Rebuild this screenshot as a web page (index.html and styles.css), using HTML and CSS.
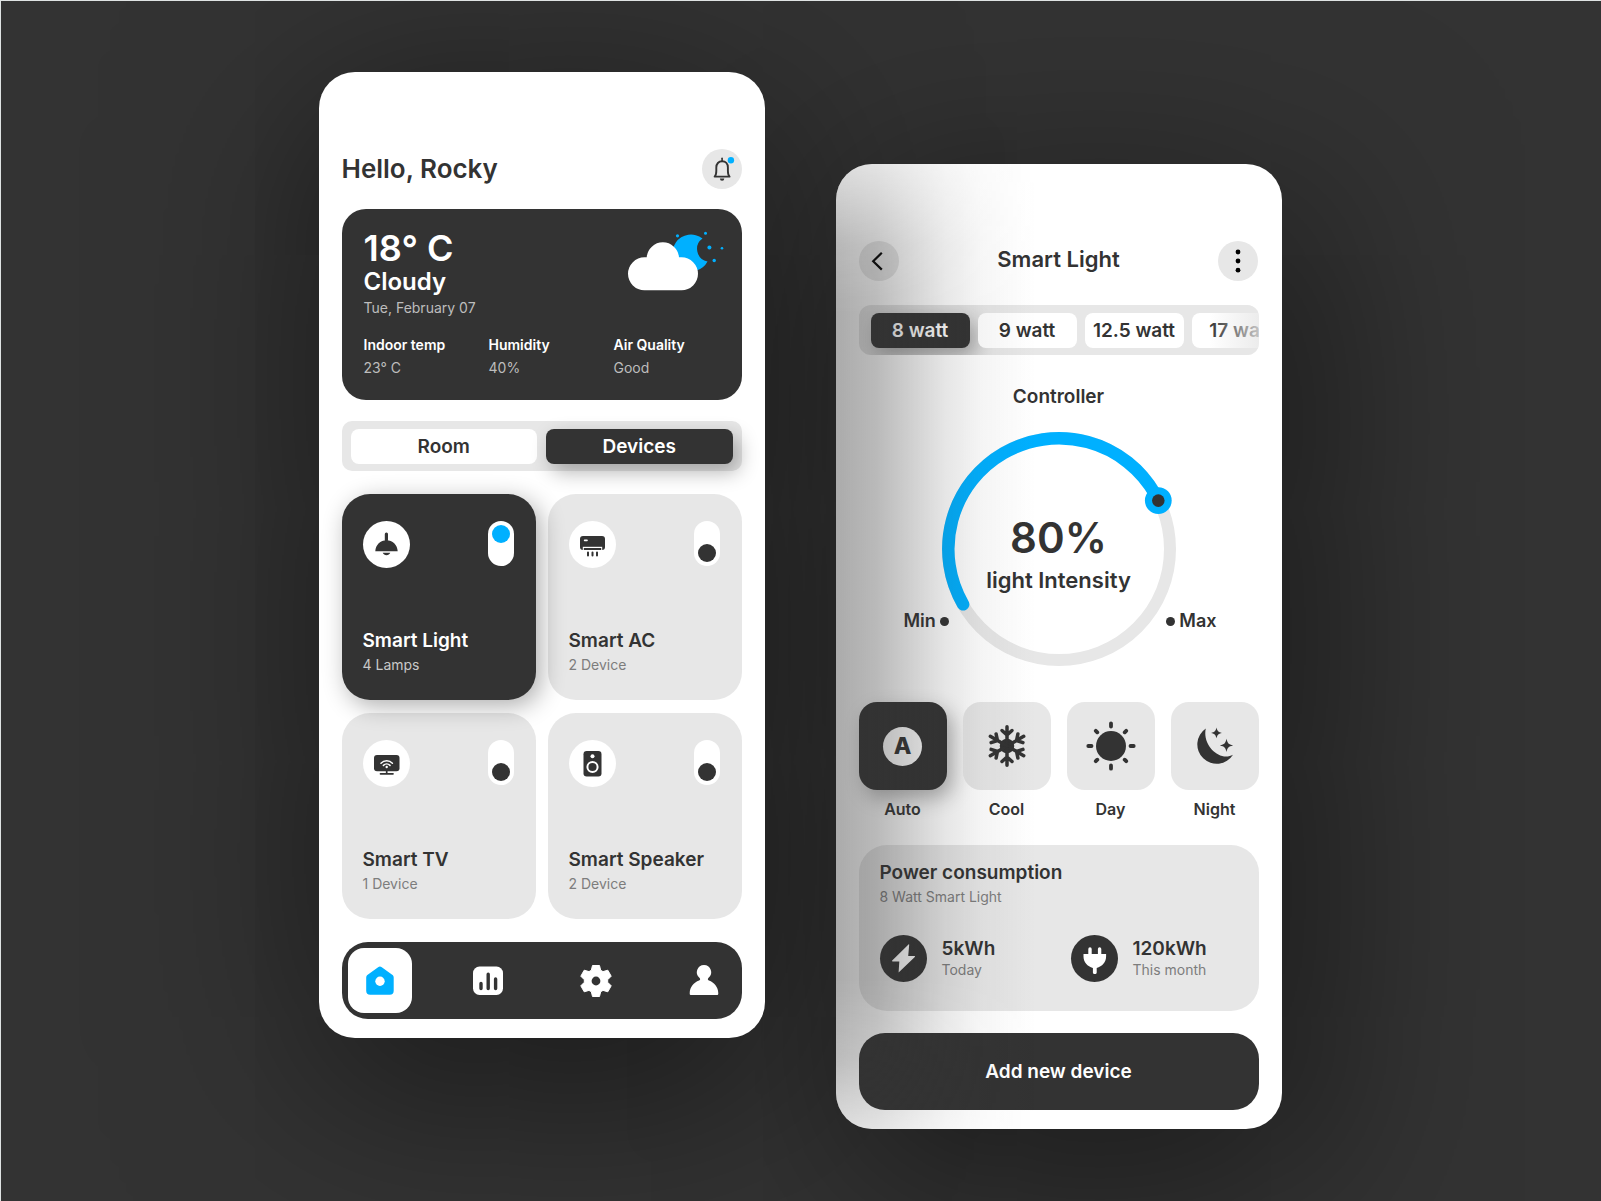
FILE: index.html
```html
<!DOCTYPE html>
<html lang="en">
<head>
<meta charset="utf-8">
<meta name="viewport" content="width=device-width, initial-scale=1">
<title>Smart Home</title>
<link rel="stylesheet" href="styles.css">
</head>
<body>
<div class="stage">
  <main class="phone phone-home">
    <header class="home-header">
      <h1 class="greeting">Hello, Rocky</h1>
      <button class="round-button" type="button" aria-label="Notifications">
        <svg width="40" height="40" viewBox="0 0 40 40" fill="none">
          <path d="M12.600 27.600c1.500-1.300 1.700-2.700 1.700-5.600V18.500c0-3.700 2.300-6.200 5.800-6.200s5.800 2.500 5.800 6.200V22c0 2.900.2 4.300 1.700 5.600z" stroke="#333" stroke-width="1.900" stroke-linejoin="round"/>
          <path d="M20.100 9.200v3" stroke="#333" stroke-width="1.600" stroke-linecap="round"/>
          <path d="M17.900 29.600h4.400a2.200 2.200 0 0 1-4.400 0z" fill="#333"/>
          <circle cx="28.900" cy="11.200" r="3.200" fill="#00b0ff"/>
        </svg>
      </button>
    </header>

    <section class="weather">
      <div class="weather-top">
        <div>
          <p class="temperature">18° C</p>
          <p class="condition">Cloudy</p>
          <p class="date">Tue, February 07</p>
        </div>
        <svg class="weather-icon" width="96" height="60" viewBox="0 0 96 60">
          <path d="M74.500 4.500A18.500 18.500 0 1 0 79.500 27.500 12.800 12.800 0 0 1 74.500 4.500z" fill="#00b0ff"/>
          <path d="M16.500 56.300a16.500 16.500 0 0 1 0-33h2.200a16.200 16.200 0 0 1 32.300 0h2.500a16.500 16.500 0 0 1 0 33z" fill="#fff"/>
          <g fill="#00b0ff">
            <circle cx="49.500" cy="1.800" r="1.600"/><circle cx="77.500" cy="-.8" r="1.500"/>
            <circle cx="81.400" cy="13.600" r="2"/><circle cx="94" cy="14.200" r="1.300"/>
            <circle cx="86.200" cy="26.500" r="1.700"/>
          </g>
        </svg>
      </div>
      <dl class="stats">
        <div><dt>Indoor temp</dt><dd>23° C</dd></div>
        <div><dt>Humidity</dt><dd>40%</dd></div>
        <div><dt>Air Quality</dt><dd>Good</dd></div>
      </dl>
    </section>

    <div class="segmented">
      <button class="segment" type="button" aria-pressed="false">Room</button>
      <button class="segment segment-active" type="button" aria-pressed="true">Devices</button>
    </div>

    <section class="devices">
      <article class="device device-active">
        <div class="device-top">
          <span class="device-icon">
            <svg width="47" height="47" viewBox="0 0 47 47" fill="#333">
              <rect x="21.800" y="11.500" width="3.200" height="9" rx="1.500"/>
              <path d="M12.300 30.200c.3-6.400 5.200-11 11.200-11s10.900 4.600 11.200 11zM19.700 31.800h7.600c-.7 1.600-2 2.500-3.800 2.500s-3.100-.9-3.800-2.500z"/>
            </svg>
          </span>
          <input class="toggle" type="checkbox" id="light" checked>
        </div>
        <label class="device-label" for="light"><span class="device-name">Smart Light</span><span class="device-count">4 Lamps</span></label>
      </article>
      <article class="device">
        <div class="device-top">
          <span class="device-icon">
            <svg width="47" height="47" viewBox="0 0 47 47">
              <path d="M14 15h19a3 3 0 0 1 3 3v8a3 3 0 0 1-3 3H14a3 3 0 0 1-3-3v-8a3 3 0 0 1 3-3z" fill="#333"/>
              <path d="M13.800 30v-4.200h19.400V30" fill="#fff"/>
              <path d="M14.800 27h17.400v2H14.800z" fill="#333"/>
              <path d="M15.600 19.400h2.400" stroke="#fff" stroke-width="1.600" stroke-linecap="round"/>
              <path d="M19 31.500v3M23.500 31.500v3M28 31.500v3" stroke="#333" stroke-width="2" stroke-linecap="round"/>
            </svg>
          </span>
          <input class="toggle" type="checkbox" id="ac">
        </div>
        <label class="device-label" for="ac"><span class="device-name">Smart AC</span><span class="device-count">2 Device</span></label>
      </article>
      <article class="device">
        <div class="device-top">
          <span class="device-icon">
            <svg width="47" height="47" viewBox="0 0 47 47" fill="none">
              <rect x="11" y="15" width="25.500" height="16.200" rx="3" fill="#333"/>
              <path d="M23.700 31v3M17.500 33.800h12.500" stroke="#333" stroke-width="1.700" stroke-linecap="round"/>
              <path d="M18 23.200a8 8 0 0 1 11.400 0M20.400 25.400a4.700 4.700 0 0 1 6.600 0" stroke="#fff" stroke-width="1.500" stroke-linecap="round"/>
              <circle cx="23.700" cy="27" r="1.200" fill="#fff"/>
            </svg>
          </span>
          <input class="toggle" type="checkbox" id="tv">
        </div>
        <label class="device-label" for="tv"><span class="device-name">Smart TV</span><span class="device-count">1 Device</span></label>
      </article>
      <article class="device">
        <div class="device-top">
          <span class="device-icon">
            <svg width="47" height="47" viewBox="0 0 47 47">
              <rect x="14.500" y="11" width="18" height="25.500" rx="3.200" fill="#333"/>
              <circle cx="23.500" cy="16.200" r="2" fill="#fff"/>
              <circle cx="23.500" cy="27" r="5.100" fill="none" stroke="#fff" stroke-width="2"/>
            </svg>
          </span>
          <input class="toggle" type="checkbox" id="speaker">
        </div>
        <label class="device-label" for="speaker"><span class="device-name">Smart Speaker</span><span class="device-count">2 Device</span></label>
      </article>
    </section>

    <nav class="tabs" aria-label="Main">
      <a class="tab tab-active" href="#home" aria-label="Home">
        <svg width="32" height="32" viewBox="0 0 32 32">
          <path d="M17.800 2.200l10.400 7.600c1 .7 1.500 1.700 1.500 2.900v13.100a4 4 0 0 1-4 4H6.200a4 4 0 0 1-4-4V12.700c0-1.200.5-2.200 1.500-2.900l10.400-7.600a3.100 3.100 0 0 1 3.700 0z" fill="#00b0ff"/>
          <circle cx="16" cy="16.200" r="4.700" fill="#fff"/>
        </svg>
      </a>
      <a class="tab" href="#stats" aria-label="Statistics">
        <svg width="32" height="32" viewBox="0 0 32 32">
          <rect x="1" y="1.500" width="30" height="28.500" rx="6.500" fill="#fff"/>
          <path d="M9 18.500v5M16.200 9.200v14.300M23.600 14v9.500" stroke="#333" stroke-width="3.400" stroke-linecap="round"/>
        </svg>
      </a>
      <a class="tab" href="#settings" aria-label="Settings">
        <svg width="32" height="32" viewBox="0 0 32 32">
          <path d="M12.500.5h7l1.200 4.800 2.300 1.300 4.800-1.400 3.400 6-3.500 3.500v2.600l3.500 3.500-3.400 6-4.800-1.400-2.300 1.300-1.200 4.800h-7l-1.200-4.800L9 25.400l-4.800 1.400-3.400-6 3.500-3.500v-2.600L.8 11.200l3.400-6L9 6.600l2.300-1.300z" fill="#fff" stroke="#fff" stroke-linejoin="round"/>
          <circle cx="16" cy="16" r="4.400" fill="#333"/>
        </svg>
      </a>
      <a class="tab" href="#profile" aria-label="Profile">
        <svg width="32" height="32" viewBox="0 0 32 32" fill="#fff">
          <path d="M16 0a7.200 7.200 0 0 1 4.600 12.700c-1 .8-1.100 2.300.3 2.900 5.400 1.900 9.200 6.400 9.400 12.600 0 1.400-.4 1.900-1.700 1.900H3.400c-1.300 0-1.700-.5-1.700-1.900.2-6.200 4-10.700 9.400-12.600 1.400-.6 1.300-2.100.3-2.900A7.200 7.200 0 0 1 16 0z"/>
        </svg>
      </a>
    </nav>
  </main>

  <main class="phone phone-light">
    <header class="light-header">
      <button class="round-button" type="button" aria-label="Back">
        <svg width="40" height="40" viewBox="0 0 40 40" fill="none"><path d="M22.800 11.800l-8.600 8.400 8.600 8.400" stroke="#000" stroke-width="2.200"/></svg>
      </button>
      <h1 class="screen-title">Smart Light</h1>
      <button class="round-button" type="button" aria-label="More">
        <svg width="40" height="40" viewBox="0 0 40 40"><circle cx="20" cy="11" r="2.400"/><circle cx="20" cy="20" r="2.400"/><circle cx="20" cy="29.200" r="2.400"/></svg>
      </button>
    </header>

    <div class="watts">
      <button class="watt watt-active" type="button">8 watt</button>
      <button class="watt" type="button">9 watt</button>
      <button class="watt" type="button">12.5 watt</button>
      <button class="watt" type="button">17 watt</button>
    </div>

    <section class="controller">
      <h2 class="controller-title"><label for="intensity">Controller</label></h2>
      <div class="dial">
        <svg class="dial-ring" width="240" height="240" viewBox="0 0 240 240" fill="none">
          <circle cx="120" cy="120" r="111" stroke="#e7e7e7" stroke-width="12"/>
          <circle cx="120" cy="120" r="110.700" pathLength="360" stroke="#00b0ff" stroke-width="12.500" stroke-linecap="round" stroke-dasharray="183 360" transform="rotate(150 120 120)"/>
          <circle cx="219.300" cy="71.600" r="13.400" fill="#00b0ff"/>
          <circle cx="219.300" cy="71.600" r="6.300" fill="#333"/>
        </svg>
        <div class="dial-value">
          <span class="dial-number">80%</span>
          <span class="dial-caption">light Intensity</span>
        </div>
        <div class="dial-limits">
          <span class="limit">Min<span class="dot"></span></span>
          <span class="limit"><span class="dot"></span>Max</span>
        </div>
        <input class="dial-input" id="intensity" type="range" min="0" max="100" value="80">
      </div>
    </section>

    <section class="modes">
      <button class="mode mode-active" type="button">
        <span class="mode-tile"><span class="auto-badge">A</span></span>
        <span>Auto</span>
      </button>
      <button class="mode" type="button">
        <span class="mode-tile">
          <svg width="56" height="56" viewBox="-28 -28 56 56" fill="none" stroke="#333" stroke-width="3.500" stroke-linecap="round" stroke-linejoin="round">
            <circle r="5.500" fill="#333"/>
            <g id="arm"><path d="M0 0V-19.300M-5-15.500L0-11l5-4.500"/></g>
            <use href="#arm" transform="rotate(60)"/><use href="#arm" transform="rotate(120)"/>
            <use href="#arm" transform="rotate(180)"/><use href="#arm" transform="rotate(240)"/>
            <use href="#arm" transform="rotate(300)"/>
          </svg>
        </span>
        <span>Cool</span>
      </button>
      <button class="mode" type="button">
        <span class="mode-tile">
          <svg width="56" height="56" viewBox="-28 -28 56 56" stroke="#333" stroke-width="3.800" stroke-linecap="round">
            <circle r="15" fill="#333" stroke="none"/>
            <path d="M0-22.700v3.200M0 22.700v-3.200M-22.700 0h3.200M22.700 0h-3.200M-15.200-15.200l1.500 1.500M15.200-15.200l-1.500 1.500M-15.200 15.200l1.500-1.500M15.200 15.200l-1.500-1.500"/>
          </svg>
        </span>
        <span>Day</span>
      </button>
      <button class="mode" type="button">
        <span class="mode-tile">
          <svg width="56" height="56" viewBox="-28 -28 56 56" fill="#333">
            <path d="M-9.200-17.500A19.300 19.300 0 1 0 18 8.700C4.500 16-13-1-9.200-17.500z"/>
            <path d="M1.500-18.500c.8 3.600 1.800 4.600 5.400 5.400-3.600.8-4.600 1.800-5.400 5.400-.8-3.600-1.800-4.600-5.400-5.400 3.600-.8 4.600-1.800 5.400-5.400zM11.500-7.200c1 4.600 2 5.600 6.600 6.600-4.600 1-5.600 2-6.600 6.600-1-4.600-2-5.600-6.600-6.600 4.600-1 5.600-2 6.600-6.600z"/>
          </svg>
        </span>
        <span>Night</span>
      </button>
    </section>

    <section class="power">
      <h2 class="power-title">Power consumption</h2>
      <p class="power-sub">8 Watt Smart Light</p>
      <div class="readings">
        <div class="reading">
          <svg width="47" height="47" viewBox="0 0 47 47"><circle cx="23.500" cy="23.500" r="23.500" fill="#333"/><path d="M28.500 9.500L12.200 25.500c-.4.500-.2.900.4.900h6.700l-.7 11L34.800 21.900c.4-.5.200-.9-.4-.9h-6.200l1-11.200c0-.5-.3-.7-.7-.3z" fill="#fff"/></svg>
          <div><strong class="reading-value">5kWh</strong><span class="reading-period">Today</span></div>
        </div>
        <div class="reading">
          <svg width="47" height="47" viewBox="0 0 47 47"><circle cx="23.500" cy="23.500" r="23.500" fill="#333"/><path d="M12.500 19h22.600v2.500c0 5.500-4 10-9.400 11.500v4.400c0 2-3.800 2-3.800 0V33c-5.400-1.500-9.400-6-9.400-11.500z" fill="#fff"/><path d="M19 14v6M28.600 14v6" stroke="#fff" stroke-width="3.400" stroke-linecap="round"/></svg>
          <div><strong class="reading-value">120kWh</strong><span class="reading-period">This month</span></div>
        </div>
      </div>
    </section>

    <button class="add-device" type="button">Add new device</button>
  </main>
</div>
</body>
</html>
```
FILE: styles.css
```css
:root {
  --dark: #333;
  --grey: #e7e7e7;
  --muted: #7d7d7d;
  --blue: #00b0ff;
}

* { box-sizing: border-box; }

body {
  margin: 0;
  font-family: Inter, "Open Sans", sans-serif;
  font-size: 14px;
  line-height: 20px;
  font-weight: 400;
  color: var(--dark);
  background: var(--dark);
}

h1, h2, p, dl, dd { margin: 0; }

button {
  padding: 0;
  border: 0;
  font: inherit;
  color: inherit;
  background: none;
  cursor: pointer;
}

svg { display: block; overflow: visible; }

.stage {
  position: relative;
  z-index: 0;
  display: flex;
  justify-content: center;
  align-items: flex-start;
  gap: 71px;
  min-height: 100vh;
  padding: 71px 22px 71px 20px;
  overflow: hidden;
  border: 1px solid #dfe3e3;
  border-width: 1px 0 0 1px;
}

.phone {
  position: relative;
  flex: 0 1 446px;
  min-width: 0;
  display: flex;
  flex-direction: column;
  padding: 77px 23px 19px;
  border-radius: 36px;
  background: #fff;
}

/* Ambient shadow, kept behind both phones */
.phone::before {
  content: "";
  position: absolute;
  inset: 0;
  z-index: -1;
  border-radius: 36px;
  box-shadow: 0 40px 200px rgba(0, 0, 0, .58);
}

.phone-light { margin-top: 92px; }
.phone-light::before { box-shadow: 30px 40px 200px rgba(0, 0, 0, .55); }

/* Shade cast on the left side of the second phone */
.phone-light::after {
  content: "";
  position: absolute;
  inset: 0;
  border-radius: 36px;
  pointer-events: none;
  background: linear-gradient(to right, rgba(51, 51, 51, .41), rgba(51, 51, 51, .34) 40px, rgba(51, 51, 51, .23) 75px, rgba(51, 51, 51, .12) 110px, rgba(51, 51, 51, .05) 145px, rgba(51, 51, 51, 0) 200px);
  mask-image: linear-gradient(to bottom, rgba(0, 0, 0, .4), rgba(0, 0, 0, .85) 80px, #000 150px, #000 calc(100% - 150px), rgba(0, 0, 0, .8) calc(100% - 70px), rgba(0, 0, 0, .4));
}

.home-header,
.light-header {
  display: flex;
  justify-content: space-between;
  align-items: center;
}

.greeting { font-size: 26px; line-height: 32px; font-weight: 600; }

.round-button {
  width: 40px;
  height: 40px;
  border-radius: 50%;
  background: var(--grey);
}

.weather {
  margin-top: 20px;
  padding: 19px 22px 22px;
  border-radius: 24px;
  color: #fff;
  background: var(--dark);
}

.weather-top { display: flex; justify-content: space-between; }
.weather-icon { margin: 6px -4px 0 0; }
.temperature { font-size: 36px; line-height: 40px; font-weight: 600; }
.condition { font-size: 24px; line-height: 28px; font-weight: 600; }
.date { margin-top: 2px; color: #bdbdbd; }

.stats {
  display: grid;
  grid-template-columns: 125px 125px 1fr;
  margin-top: 17px;
}
.stats dt { font-weight: 600; }
.stats dd { margin-top: 3px; color: #bdbdbd; }

.segmented {
  display: grid;
  grid-template-columns: 1fr 1fr;
  gap: 9px;
  margin-top: 21px;
  padding: 8px 9px 7px;
  border-radius: 10px;
  background: var(--grey);
}

.segment,
.watt {
  height: 35px;
  border-radius: 8px;
  font-size: 19px;
  font-weight: 600;
  white-space: nowrap;
  background: #fff;
}

.segment-active,
.watt-active {
  color: #fff;
  background: var(--dark);
  box-shadow: 6px 8px 20px rgba(0, 0, 0, .3);
}

.devices {
  display: grid;
  grid-template-columns: 1fr 1fr;
  gap: 13px 12px;
  margin-top: 23px;
}

.device {
  display: flex;
  flex-direction: column;
  justify-content: space-between;
  min-height: 206px;
  padding: 27px 22px 25px 21px;
  border-radius: 28px;
  background: var(--grey);
}

.device-active {
  z-index: 1;
  color: #fff;
  background: var(--dark);
  box-shadow: 5px 6px 24px rgba(0, 0, 0, .32);
}

.device-top { display: flex; justify-content: space-between; align-items: flex-start; }
.device-icon { border-radius: 50%; background: #fff; }
.device-label { display: flex; flex-direction: column; gap: 2px; }
.device-name { font-size: 19px; line-height: 24px; font-weight: 600; }
.device-count { color: var(--muted); }
.device-active .device-count { color: #c9c9c9; }

.toggle {
  appearance: none;
  display: flex;
  align-items: flex-end;
  width: 26px;
  height: 45px;
  margin: 0;
  padding: 4px;
  border-radius: 13px;
  background: #fff;
  cursor: pointer;
}
.toggle::before {
  content: "";
  width: 18px;
  height: 18px;
  border-radius: 50%;
  background: var(--dark);
}
.toggle:checked { align-items: flex-start; }
.toggle:checked::before { background: var(--blue); }

.tabs {
  display: flex;
  justify-content: space-between;
  margin-top: 23px;
  padding: 6px;
  border-radius: 26px;
  background: var(--dark);
}
.tab {
  display: grid;
  place-items: center;
  width: 64px;
  height: 65px;
  border-radius: 16px;
}
.tab-active { background: #fff; }

.screen-title { font-size: 22px; line-height: 28px; font-weight: 600; padding-bottom: 4px; }

.watts {
  position: relative;
  display: flex;
  gap: 8px;
  margin-top: 24px;
  padding: 8px 0 7px 12px;
  border-radius: 12px;
  overflow: hidden;
  background: var(--grey);
}
.watt { flex: 0 0 99px; }
.watts::after {
  content: "";
  position: absolute;
  inset: 0 0 0 auto;
  width: 50px;
  background: linear-gradient(to right, rgba(231, 231, 231, 0), rgba(231, 231, 231, .8));
}

.controller { margin-top: 30px; }
.controller-title { font-size: 19px; line-height: 24px; font-weight: 600; text-align: center; }

.dial { display: grid; justify-items: center; margin-top: 20px; }
.dial > * { grid-area: 1 / 1; }
.dial-value {
  align-self: center;
  display: flex;
  flex-direction: column;
  align-items: center;
  gap: 4px;
  padding-top: 10px;
  font-weight: 600;
}
.dial-number { font-size: 42px; line-height: 48px; }
.dial-caption { font-size: 22px; line-height: 28px; }
.dial-limits {
  align-self: end;
  justify-self: stretch;
  display: flex;
  justify-content: space-between;
  padding: 0 42px 36px 45px;
  font-size: 18px;
  line-height: 24px;
  font-weight: 600;
}
.limit { display: flex; align-items: center; gap: 4px; }
.dot { width: 9px; height: 9px; border-radius: 50%; background: var(--dark); }
.dial-input { width: 240px; height: 240px; margin: 0; opacity: 0; cursor: pointer; }

.modes { display: flex; justify-content: space-between; margin-top: 33px; }
.mode {
  display: flex;
  flex-direction: column;
  align-items: center;
  gap: 8px;
  font-size: 16px;
  line-height: 22px;
  font-weight: 600;
}
.mode-tile {
  display: grid;
  place-items: center;
  width: 88px;
  height: 88px;
  border-radius: 18px;
  background: var(--grey);
}
.mode-active .mode-tile {
  background: var(--dark);
  box-shadow: 6px 8px 20px rgba(0, 0, 0, .3);
}
.auto-badge {
  display: grid;
  place-items: center;
  width: 39px;
  height: 39px;
  border-radius: 50%;
  font-size: 23px;
  font-weight: 800;
  background: #fff;
}

.power {
  margin-top: 25px;
  padding: 16px 21px 29px;
  border-radius: 28px;
  background: var(--grey);
}
.power-title { font-size: 19px; line-height: 24px; font-weight: 600; }
.power-sub { margin-top: 2px; color: var(--muted); }
.readings { display: grid; grid-template-columns: 191px 1fr; margin-top: 28px; }
.reading { display: flex; align-items: center; gap: 15px; }
.reading-value { display: block; font-size: 19px; line-height: 22px; font-weight: 600; }
.reading-period { display: block; color: var(--muted); }

.add-device {
  height: 77px;
  margin-top: 22px;
  border-radius: 26px;
  font-size: 19px;
  font-weight: 600;
  color: #fff;
  background: var(--dark);
}
```
